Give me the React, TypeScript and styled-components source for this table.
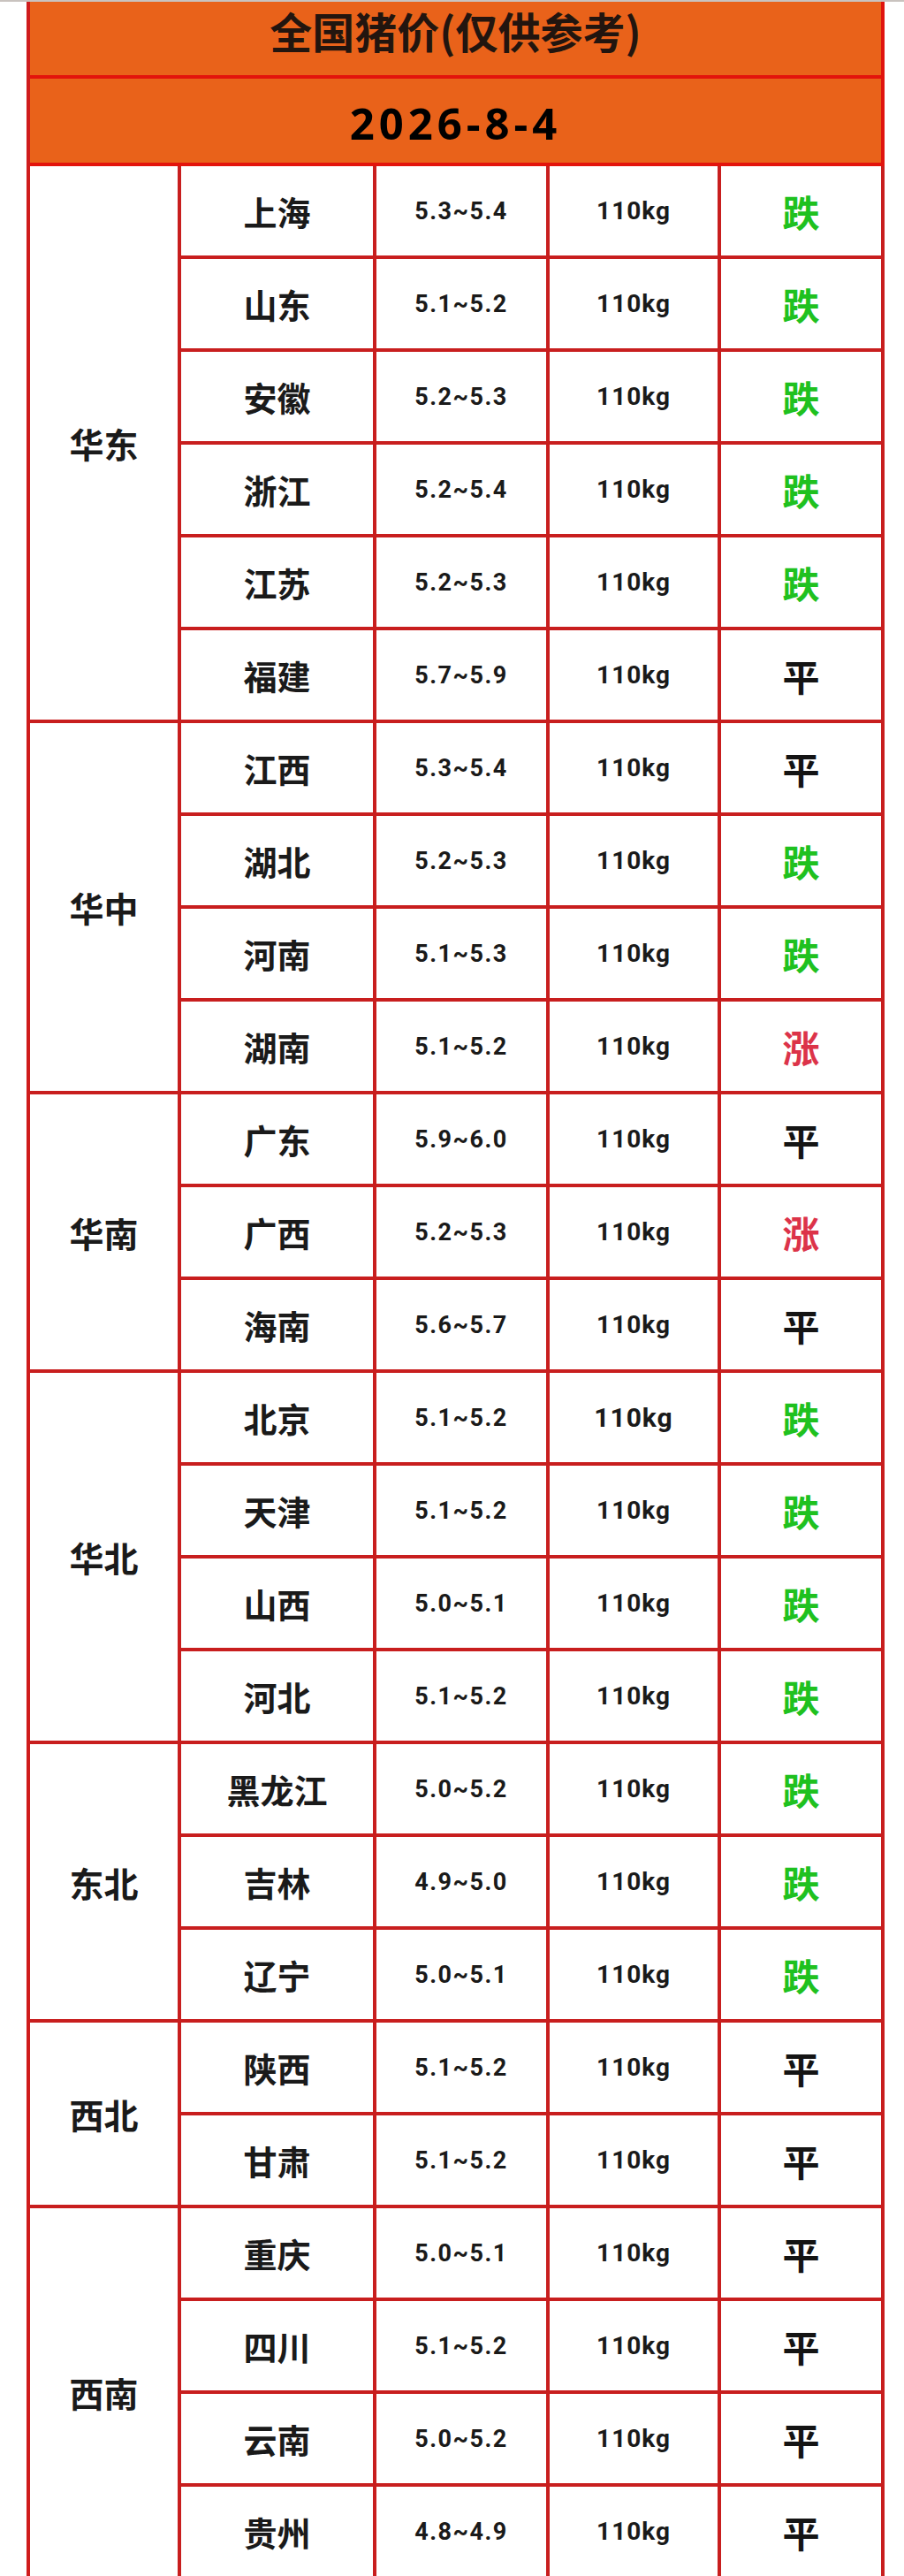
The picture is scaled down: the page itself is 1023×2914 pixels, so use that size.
import styled, { createGlobalStyle } from "styled-components";

type Trend = "up" | "down" | "flat";

type Province = {
  name: string;
  price: string;
  trend: Trend;
  bigWeight?: boolean;
};

type Region = {
  name: string;
  provinces: Province[];
};

const regions: Region[] = [
  {
    name: "华东",
    provinces: [
      { name: "上海", price: "5.3~5.4", trend: "down" },
      { name: "山东", price: "5.1~5.2", trend: "down" },
      { name: "安徽", price: "5.2~5.3", trend: "down" },
      { name: "浙江", price: "5.2~5.4", trend: "down" },
      { name: "江苏", price: "5.2~5.3", trend: "down" },
      { name: "福建", price: "5.7~5.9", trend: "flat" },
    ],
  },
  {
    name: "华中",
    provinces: [
      { name: "江西", price: "5.3~5.4", trend: "flat" },
      { name: "湖北", price: "5.2~5.3", trend: "down" },
      { name: "河南", price: "5.1~5.3", trend: "down" },
      { name: "湖南", price: "5.1~5.2", trend: "up" },
    ],
  },
  {
    name: "华南",
    provinces: [
      { name: "广东", price: "5.9~6.0", trend: "flat" },
      { name: "广西", price: "5.2~5.3", trend: "up" },
      { name: "海南", price: "5.6~5.7", trend: "flat" },
    ],
  },
  {
    name: "华北",
    provinces: [
      { name: "北京", price: "5.1~5.2", trend: "down", bigWeight: true },
      { name: "天津", price: "5.1~5.2", trend: "down" },
      { name: "山西", price: "5.0~5.1", trend: "down" },
      { name: "河北", price: "5.1~5.2", trend: "down" },
    ],
  },
  {
    name: "东北",
    provinces: [
      { name: "黑龙江", price: "5.0~5.2", trend: "down" },
      { name: "吉林", price: "4.9~5.0", trend: "down" },
      { name: "辽宁", price: "5.0~5.1", trend: "down" },
    ],
  },
  {
    name: "西北",
    provinces: [
      { name: "陕西", price: "5.1~5.2", trend: "flat" },
      { name: "甘肃", price: "5.1~5.2", trend: "flat" },
    ],
  },
  {
    name: "西南",
    provinces: [
      { name: "重庆", price: "5.0~5.1", trend: "flat" },
      { name: "四川", price: "5.1~5.2", trend: "flat" },
      { name: "云南", price: "5.0~5.2", trend: "flat" },
      { name: "贵州", price: "4.8~4.9", trend: "flat" },
    ],
  },
];

const trendLabel: Record<Trend, string> = { up: "涨", down: "跌", flat: "平" };
const trendColor: Record<Trend, string> = {
  up: "#dc3349",
  down: "#1fc11f",
  flat: "#141414",
};

const GlobalStyle = createGlobalStyle`
  html, body {
    margin: 0;
    padding: 0;
    background: #ffffff;
  }
  body {
    font-family: "Noto Sans CJK SC", "Noto Sans", sans-serif;
  }
`;

const Page = styled.div`
  border-top: 2px solid #c9c3bf;
  background: #ffffff;
`;

const PriceTable = styled.div`
  margin-left: 30px;
  width: 971px;
  display: grid;
  grid-template-columns: 171px 221px 196px 194px 185px;
  grid-template-rows: 87px 99px;
  grid-auto-rows: 105px;
  border-left: 4px solid #cf1c1c;
  box-sizing: border-box;
`;

const Cell = styled.div`
  box-sizing: border-box;
  border-right: 4px solid #c81e1e;
  border-bottom: 4px solid #c81e1e;
  display: flex;
  align-items: center;
  justify-content: center;
  color: #1a1a1a;
  font-weight: 700;
`;

const HeaderCell = styled(Cell)`
  grid-column: 1 / -1;
  background: #e9621a;
  border-right-color: #e0140e;
  border-bottom-color: #e3130c;
`;

const TitleCell = styled(HeaderCell)`
  align-items: flex-start;
  padding-top: 7px;
  color: #22150f;
  font-size: 48px;
  line-height: 50px;
`;

const DateCell = styled(HeaderCell)`
  color: #000000;
  font-family: "Open Sans", "Noto Sans", sans-serif;
  font-size: 49px;
  letter-spacing: 5px;
  padding-top: 4px;
`;

const RegionCell = styled(Cell)<{ $span: number }>`
  grid-column: 1;
  grid-row: span ${({ $span }) => $span};
  font-size: 39px;
`;

const ProvinceCell = styled(Cell)`
  grid-column: 2;
  font-size: 38px;
`;

const PriceCell = styled(Cell)`
  grid-column: 3;
  font-family: Roboto, "Noto Sans", sans-serif;
  font-size: 27px;
  letter-spacing: 1.5px;
`;

const WeightCell = styled(Cell)<{ $big?: boolean }>`
  grid-column: 4;
  font-family: Roboto, "Noto Sans", sans-serif;
  font-size: ${({ $big }) => ($big ? "30px" : "28px")};
  letter-spacing: 1px;
`;

const TrendCell = styled(Cell)<{ $trend: Trend }>`
  grid-column: 5;
  font-size: 42px;
  color: ${({ $trend }) => trendColor[$trend]};
`;

export default function App() {
  return (
    <Page>
      <GlobalStyle />
      <PriceTable>
        <TitleCell>全国猪价(仅供参考)</TitleCell>
        <DateCell>2026-8-4</DateCell>
        {regions.map((region) => [
          <RegionCell key={region.name} $span={region.provinces.length}>
            {region.name}
          </RegionCell>,
          ...region.provinces.map((p) => [
            <ProvinceCell key={p.name + "-n"}>{p.name}</ProvinceCell>,
            <PriceCell key={p.name + "-p"}>{p.price}</PriceCell>,
            <WeightCell key={p.name + "-w"} $big={p.bigWeight}>
              110kg
            </WeightCell>,
            <TrendCell key={p.name + "-t"} $trend={p.trend}>
              {trendLabel[p.trend]}
            </TrendCell>,
          ]),
        ])}
      </PriceTable>
    </Page>
  );
}
